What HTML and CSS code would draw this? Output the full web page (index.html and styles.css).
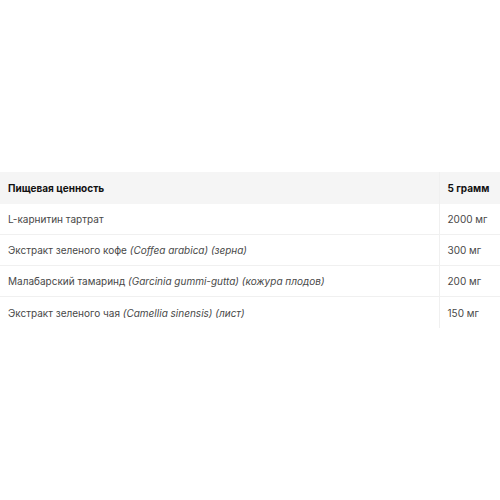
FILE: index.html
```html
<!DOCTYPE html>
<html lang="ru">
<head>
<meta charset="utf-8">
<link rel="stylesheet" href="styles.css">
</head>
<body>
<div class="page">
  <table class="facts">
    <colgroup><col><col class="amount-col"></colgroup>
    <thead>
      <tr><th class="name">Пищевая ценность</th><th class="amount">5 грамм</th></tr>
    </thead>
    <tbody>
      <tr><td class="name">L-карнитин тартрат</td><td class="amount">2000 мг</td></tr>
      <tr><td class="name">Экстракт зеленого кофе <i>(Coffea arabica)</i> <i>(зерна)</i></td><td class="amount">300 мг</td></tr>
      <tr><td class="name">Малабарский тамаринд <i>(Garcinia gummi-gutta)</i> <i>(кожура плодов)</i></td><td class="amount">200 мг</td></tr>
      <tr><td class="name">Экстракт зеленого чая <i>(Camellia sinensis)</i> <i>(лист)</i></td><td class="amount">150 мг</td></tr>
    </tbody>
  </table>
</div>
</body>
</html>
```

FILE: styles.css
```css
html, body {
  margin: 0;
  padding: 0;
  background: #fff;
}
.page {
  padding-top: 172px;
  font-family: Inter, "Noto Sans", sans-serif;
  font-size: 10px;
  color: #484848;
}
.facts {
  width: 100%;
  border-collapse: collapse;
  table-layout: fixed;
}
.amount-col {
  width: 61px;
}
.facts th, .facts td {
  text-align: left;
  padding: 0 8px;
  height: 30px;
  border-bottom: 1px solid #f0f0f0;
  font-weight: 400;
  white-space: nowrap;
}
.facts thead th {
  background: #f5f5f5;
  color: #111;
  font-weight: 700;
  height: 32px;
  border-bottom: none;
}
.facts .amount {
  border-left: 1px solid #f0f0f0;
}
.facts tbody tr:last-child td {
  border-bottom: none;
  height: 31px;
}
```
